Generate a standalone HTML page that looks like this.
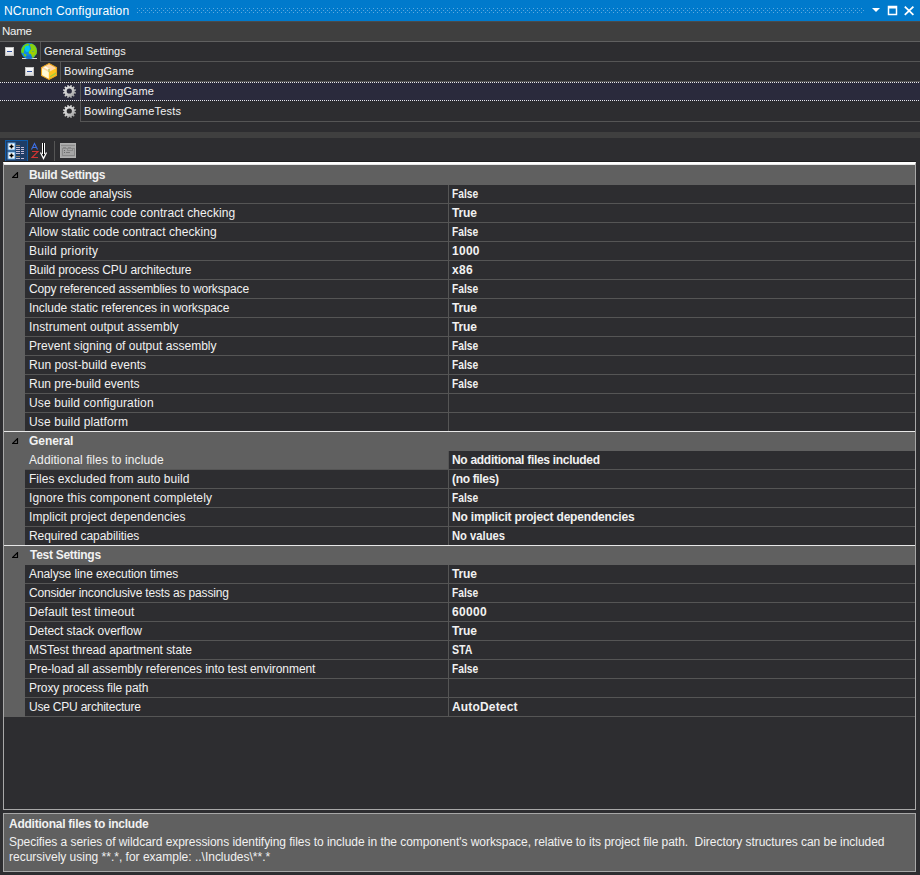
<!DOCTYPE html>
<html><head><meta charset="utf-8">
<style>
*{margin:0;padding:0;box-sizing:border-box}
html,body{width:920px;height:875px;overflow:hidden;background:#2d2d30;font-family:"Liberation Sans",sans-serif;font-size:12px;color:#f1f1f1}
.abs{position:absolute}
#title{position:absolute;left:0;top:0;width:920px;height:21px;background:#007acc}
#title .t{position:absolute;top:4px;line-height:14px;color:#fff;white-space:nowrap}
#grip{position:absolute;left:135px;top:8px;width:729px;height:5px;
 background-image:linear-gradient(#4da3de,#4da3de),linear-gradient(#4da3de,#4da3de),linear-gradient(#4da3de,#4da3de);
 background-size:1px 1px;background-repeat:no-repeat}
#hdrline{position:absolute;left:0;top:21px;width:920px;height:1px;background:#4b4b4b}
#hdr{position:absolute;left:0;top:22px;width:920px;height:19px;background:#3f3f3f}
#hdr .t{position:absolute;top:2px;line-height:14px;white-space:nowrap;font-size:11px}
#hdrb{position:absolute;left:0;top:41px;width:920px;height:1px;background:#606060}
.hl{position:absolute;height:1px;background:#555}
.vl{position:absolute;width:1px;background:#555}
.tt{position:absolute;line-height:14px;white-space:nowrap;color:#f1f1f1;font-size:11px}
.dot{position:absolute;left:0;width:920px;height:1px;background-image:linear-gradient(to right,#e8e8e8 50%,transparent 50%);background-size:2px 1px}
#splitter{position:absolute;left:0;top:132px;width:920px;height:6px;background:#3f3f3f}
#grid{position:absolute;left:3px;top:162px;width:913px;height:648px;border:1px solid #a8a8a8;border-top:2px solid #fff;background:#2d2d30;overflow:hidden}
#gutter{position:absolute;left:0;top:0;width:21px;height:553px;background:#606060}
.cat{position:absolute;left:0;width:911px;height:19px;background:#606060}
.cat::before{content:"";position:absolute;left:0;top:-1px;width:911px;height:1px;background:#e8e8e8}
.cat.first{border-top:1px solid #9a9a9a}
.cat b{position:absolute;left:25px;top:2px;line-height:14px;font-weight:bold;white-space:nowrap;color:#f1f1f1}
.prow{position:absolute;left:21px;width:890px;height:19px;background:#2d2d30;border-bottom:1px solid #555}
.prow .lab{position:absolute;left:4px;top:2px;line-height:14px;white-space:nowrap}
.prow .val{position:absolute;left:423px;top:0;width:467px;height:18px;border-left:1px solid #555;background:#2d2d30;padding-left:3px;padding-top:2px;line-height:14px;font-weight:bold;white-space:nowrap}
.tri{position:absolute;left:8px;top:6px;width:7px;height:7px}
.prow.sel{background:#606060}
#desc{position:absolute;left:3px;top:813px;width:913px;height:59px;border:1px solid #a8a8a8;background:#606060}
#desc b{position:absolute;left:5px;top:3px;line-height:14px;white-space:nowrap}
#desc p{position:absolute;left:5px;line-height:15px;white-space:nowrap}
</style></head><body>
<div id="title"><span class="t" style="left:4px;letter-spacing:0.15px">NCrunch Configuration</span><svg class="abs" style="left:137px;top:8px" width="727" height="5"><defs><pattern id="gp" width="4" height="4" patternUnits="userSpaceOnUse"><rect x="0" y="0" width="1" height="1" fill="#5ea9de"/><rect x="2" y="2" width="1" height="1" fill="#5ea9de"/></pattern></defs><rect width="727" height="5" fill="url(#gp)"/></svg>
<svg class="abs" style="left:870px;top:5px" width="48" height="12" viewBox="0 0 48 12">
 <path d="M2 3h8l-4 4z" fill="#fff"/>
 <rect x="18.5" y="1.5" width="8" height="8" fill="none" stroke="#fff" stroke-width="1.5"/>
 <rect x="18" y="1" width="9" height="2.5" fill="#fff"/>
 <path d="M34.8 1.6l8.6 8.2M43.4 1.6l-8.6 8.2" stroke="#fff" stroke-width="1.8"/>
</svg>
</div>
<div id="hdrline"></div>
<div id="hdr"><span class="t" style="left:2px;font-size:11.5px;letter-spacing:-0.25px">Name</span></div>
<div id="hdrb"></div>

<!-- tree rows -->
<div class="vl" style="left:40px;top:42px;height:19px"></div>
<div class="hl" style="left:40px;top:61px;width:880px"></div>
<div class="vl" style="left:60px;top:62px;height:19px"></div>
<div class="abs" style="left:0;top:82px;width:920px;height:19px;background:#2a2a3c"></div>
<div class="hl" style="left:80px;top:81px;width:840px"></div>
<div class="dot" style="top:82px"></div>
<div class="dot" style="top:100px"></div>
<div class="vl" style="left:80px;top:83px;height:17px"></div>
<div class="vl" style="left:80px;top:101px;height:20px"></div>
<div class="hl" style="left:80px;top:121px;width:840px"></div>

<!-- expanders -->
<div class="abs" style="left:5px;top:47px;width:9px;height:9px;border:1px solid #c4c4c4;background:linear-gradient(#fff,#dcdcdc)"><div class="abs" style="left:1px;top:3px;width:5px;height:1px;background:#3050a0"></div></div>
<div class="abs" style="left:25px;top:67px;width:9px;height:9px;border:1px solid #c4c4c4;background:linear-gradient(#fff,#dcdcdc)"><div class="abs" style="left:1px;top:3px;width:5px;height:1px;background:#3050a0"></div></div>

<!-- globe -->
<svg class="abs" style="left:21px;top:43px" width="16" height="16" viewBox="0 0 16 16">
 <rect x="1" y="15" width="15" height="1" fill="#d8d8d8"/>
 <circle cx="8" cy="8" r="8" fill="#1088e4"/>
 <path d="M0.2 9.5C0 6 1.5 3 4 1.5L6.5 0.4 8 1 7.5 3 5 3.5 3.5 5.5 3 8 2.5 10.5z" fill="#6ed410"/>
 <path d="M8.5 1.2L11 0.8 13.5 2.2 15.2 4.5 16 8 15.6 11 14 12.5 12.5 14.5 11 15 10 13 10.5 11 8.5 11 7.5 9.5 8.5 7.5 10 6 9.5 4z" fill="#86d20e"/>
 <path d="M10 7.5l2.5-0.5 1.5 2-1 3-2 0-1.5-1.5z" fill="#a4cc00"/>
 <path d="M11 8l1.5 0 0.5 1-1.5 0z" fill="#3aa88a"/>
 <path d="M4 3.5L7 2.5 8.5 3.5 9 6 8 8.5 6 9 4.5 8 3.8 6z" fill="#00c6f6"/>
 <path d="M2.5 10.5l2 0.5 1.5 1.5 0.5 2-2-0.8-1.5-1.5z" fill="#6cc81a"/>
 <path d="M5 12.5l5.5 0 1 2.5-3.5 1-3-0.8z" fill="#1670cc"/>
</svg>
<!-- package box -->
<svg class="abs" style="left:40px;top:62px" width="18" height="19" viewBox="0 0 18 19">
 <path d="M9 1.5L16.5 5.5V13.5L9 17.5 1.5 13.5V5.5z" fill="#ffd6a6"/>
 <path d="M1.5 6L8.5 10V17L1.5 13.5z" fill="#fffbd2"/>
 <path d="M9 10L16.5 6V13.5L9 17.5z" fill="#ffc41e"/>
 <path d="M10 15.5l6-3.5v-1.8l-6 3.8z" fill="#a4cc3c"/>
 <path d="M3 5l5 2.8 1.2-1.3L4.5 3.8z" fill="#fffef0"/>
 <path d="M8.5 6.5l1 1 0 3-1-0.5z" fill="#9cc840"/>
 <path d="M9 1.5L16.5 5.5V13.5L9 17.5 1.5 13.5V5.5z" fill="none" stroke="#e9a41c" stroke-width="1.1"/>
</svg>
<!-- gears -->
<svg class="abs" style="left:62px;top:84px" width="15" height="15" viewBox="0 0 15 15">
 <defs><linearGradient id="gg" x1="0" y1="0" x2="1" y2="1"><stop offset="0" stop-color="#ececec"/><stop offset="0.55" stop-color="#c8c8c8"/><stop offset="1" stop-color="#8a8a8a"/></linearGradient></defs>
 <path d="M12.70 7.50 L12.67 8.04 L14.11 8.62 L13.78 9.84 L12.25 9.62 L12.00 10.10 L11.71 10.56 L12.66 11.77 L11.77 12.66 L10.56 11.71 L10.10 12.00 L9.62 12.25 L9.84 13.78 L8.62 14.11 L8.04 12.67 L7.50 12.70 L6.96 12.67 L6.38 14.11 L5.16 13.78 L5.38 12.25 L4.90 12.00 L4.44 11.71 L3.23 12.66 L2.34 11.77 L3.29 10.56 L3.00 10.10 L2.75 9.62 L1.22 9.84 L0.89 8.62 L2.33 8.04 L2.30 7.50 L2.33 6.96 L0.89 6.38 L1.22 5.16 L2.75 5.38 L3.00 4.90 L3.29 4.44 L2.34 3.23 L3.23 2.34 L4.44 3.29 L4.90 3.00 L5.38 2.75 L5.16 1.22 L6.38 0.89 L6.96 2.33 L7.50 2.30 L8.04 2.33 L8.62 0.89 L9.84 1.22 L9.62 2.75 L10.10 3.00 L10.56 3.29 L11.77 2.34 L12.66 3.23 L11.71 4.44 L12.00 4.90 L12.25 5.38 L13.78 5.16 L14.11 6.38 L12.67 6.96Z" fill="url(#gg)"/>
 <circle cx="7.3" cy="7" r="2.6" fill="#2a2a3c"/>
</svg>
<svg class="abs" style="left:62px;top:104px" width="15" height="15" viewBox="0 0 15 15">
 <path d="M12.70 7.50 L12.67 8.04 L14.11 8.62 L13.78 9.84 L12.25 9.62 L12.00 10.10 L11.71 10.56 L12.66 11.77 L11.77 12.66 L10.56 11.71 L10.10 12.00 L9.62 12.25 L9.84 13.78 L8.62 14.11 L8.04 12.67 L7.50 12.70 L6.96 12.67 L6.38 14.11 L5.16 13.78 L5.38 12.25 L4.90 12.00 L4.44 11.71 L3.23 12.66 L2.34 11.77 L3.29 10.56 L3.00 10.10 L2.75 9.62 L1.22 9.84 L0.89 8.62 L2.33 8.04 L2.30 7.50 L2.33 6.96 L0.89 6.38 L1.22 5.16 L2.75 5.38 L3.00 4.90 L3.29 4.44 L2.34 3.23 L3.23 2.34 L4.44 3.29 L4.90 3.00 L5.38 2.75 L5.16 1.22 L6.38 0.89 L6.96 2.33 L7.50 2.30 L8.04 2.33 L8.62 0.89 L9.84 1.22 L9.62 2.75 L10.10 3.00 L10.56 3.29 L11.77 2.34 L12.66 3.23 L11.71 4.44 L12.00 4.90 L12.25 5.38 L13.78 5.16 L14.11 6.38 L12.67 6.96Z" fill="url(#gg)"/>
 <circle cx="7.3" cy="7" r="2.6" fill="#2d2d30"/>
</svg>

<span class="tt" style="left:44px;top:44px;letter-spacing:-0.017px">General Settings</span>
<span class="tt" style="left:64px;top:64px;letter-spacing:0.15px">BowlingGame</span>
<span class="tt" style="left:84px;top:84px;letter-spacing:0.14px">BowlingGame</span>
<span class="tt" style="left:84px;top:104px;letter-spacing:0.183px">BowlingGameTests</span>

<div id="splitter"></div>

<!-- toolbar -->
<div class="abs" style="left:5px;top:140px;width:23px;height:22px;border:1px solid #0e5aa7;background:#1f3d66"></div>
<svg class="abs" style="left:5px;top:140px" width="23" height="22" viewBox="0 0 23 22">
 <rect x="3" y="3" width="7" height="7" fill="#fff" stroke="#5aa0e0" stroke-width="1"/>
 <path d="M6.5 4.5v4M4.5 6.5h4" stroke="#000" stroke-width="1.6"/>
 <rect x="3" y="12" width="7" height="7" fill="#fff" stroke="#5aa0e0" stroke-width="1"/>
 <path d="M6.5 13.5v4M4.5 15.5h4" stroke="#000" stroke-width="1.6"/>
 <g fill="#c4bcd8"><rect x="11" y="7" width="4" height="1"/><rect x="16" y="7" width="3" height="1"/>
 <rect x="11" y="9" width="4" height="1"/><rect x="16" y="9" width="3" height="1"/>
 <rect x="11" y="11" width="4" height="1"/><rect x="16" y="11" width="3" height="1"/>
 <rect x="11" y="13" width="4" height="1"/><rect x="16" y="13" width="3" height="1"/>
 <rect x="11" y="18" width="4" height="1"/><rect x="16" y="18" width="3" height="1"/></g>
 <rect x="11" y="5" width="4" height="1" fill="#8a7a60"/><rect x="11" y="16" width="4" height="1" fill="#8a7a60"/>
</svg>
<svg class="abs" style="left:30px;top:142px" width="18" height="18" viewBox="0 0 18 18" shape-rendering="crispEdges">
 <path d="M1.5 7.5L4.5 1.5 7.5 7.5M3 5.5H6" fill="none" stroke="#3d6fe6" stroke-width="1.1" shape-rendering="auto"/>
 <path d="M2 9.5H8L2 15.5H8" fill="none" stroke="#d03434" stroke-width="1.1" shape-rendering="auto"/>
 <rect x="12" y="1" width="1" height="11" fill="#fff"/><rect x="14" y="1" width="1" height="11" fill="#fff"/>
 <rect x="13" y="1" width="1" height="13" fill="#000"/>
 <path d="M10.5 10.5L13.5 16.5 16.5 10.5" fill="none" stroke="#fff" stroke-width="1.3" shape-rendering="auto"/>
</svg>
<div class="abs" style="left:54px;top:141px;width:1px;height:21px;background:#555"></div>
<svg class="abs" style="left:60px;top:143px" width="16" height="15" viewBox="0 0 16 15" shape-rendering="crispEdges">
 <rect x="0" y="0" width="16" height="15" fill="#b0b0b0"/>
 <rect x="1" y="1" width="14" height="13" fill="#a6a6a6"/>
 <rect x="1" y="2" width="14" height="1" fill="#8e8e8e"/>
 <rect x="2" y="5" width="12" height="7" fill="none" stroke="#8a8a8a" stroke-width="1"/>
 <rect x="3" y="4" width="3" height="1" fill="#8a8a8a"/><rect x="8" y="4" width="3" height="1" fill="#8a8a8a"/>
 <rect x="7" y="5" width="5" height="2" fill="none" stroke="#8a8a8a" stroke-width="1"/>
 <rect x="4" y="7" width="1" height="1" fill="#6a6a6a"/><rect x="4" y="9" width="1" height="1" fill="#6a6a6a"/><rect x="6" y="9" width="4" height="1" fill="#7a7a7a"/>
</svg>

<div class="abs" style="left:3px;top:161px;width:913px;height:1px;background:#1e1e1f"></div>
<div id="grid">
 <div id="gutter"></div>
<div class="cat first" style="top:0px;height:21px"><svg class="tri" style="top:7px" width="7" height="7"><path d="M0.6 5.5H5.5V0.6z" fill="none" stroke="#000" stroke-width="1.15"/></svg><b style="top:3px;left:25px;letter-spacing:-0.323px">Build Settings</b></div>
<div class="prow" style="top:21px"><span class="lab" style="left:4px;letter-spacing:-0.111px">Allow code analysis</span><span class="val"><i style="font-style:normal;display:inline-block;transform:scaleX(0.8516);transform-origin:0 0">False</i></span></div>
<div class="prow" style="top:40px"><span class="lab" style="left:4px;letter-spacing:0.1px">Allow dynamic code contract checking</span><span class="val"><i style="font-style:normal;letter-spacing:-0.167px">True</i></span></div>
<div class="prow" style="top:59px"><span class="lab" style="left:4px;letter-spacing:0.044px">Allow static code contract checking</span><span class="val"><i style="font-style:normal;display:inline-block;transform:scaleX(0.8516);transform-origin:0 0">False</i></span></div>
<div class="prow" style="top:78px"><span class="lab" style="left:4px;letter-spacing:0.231px">Build priority</span><span class="val"><i style="font-style:normal;letter-spacing:0.267px">1000</i></span></div>
<div class="prow" style="top:97px"><span class="lab" style="left:4px;letter-spacing:-0.147px">Build process CPU architecture</span><span class="val"><i style="font-style:normal;letter-spacing:0.3px">x86</i></span></div>
<div class="prow" style="top:116px"><span class="lab" style="left:4px;letter-spacing:-0.158px">Copy referenced assemblies to workspace</span><span class="val"><i style="font-style:normal;display:inline-block;transform:scaleX(0.8516);transform-origin:0 0">False</i></span></div>
<div class="prow" style="top:135px"><span class="lab" style="left:4px;letter-spacing:-0.081px">Include static references in workspace</span><span class="val"><i style="font-style:normal;letter-spacing:-0.167px">True</i></span></div>
<div class="prow" style="top:154px"><span class="lab" style="left:4px;letter-spacing:0.08px">Instrument output assembly</span><span class="val"><i style="font-style:normal;letter-spacing:-0.167px">True</i></span></div>
<div class="prow" style="top:173px"><span class="lab" style="left:4px;letter-spacing:0.023px">Prevent signing of output assembly</span><span class="val"><i style="font-style:normal;display:inline-block;transform:scaleX(0.8516);transform-origin:0 0">False</i></span></div>
<div class="prow" style="top:192px"><span class="lab" style="left:4px;letter-spacing:0.05px">Run post-build events</span><span class="val"><i style="font-style:normal;display:inline-block;transform:scaleX(0.8516);transform-origin:0 0">False</i></span></div>
<div class="prow" style="top:211px"><span class="lab" style="left:4px;letter-spacing:-0.013px">Run pre-build events</span><span class="val"><i style="font-style:normal;display:inline-block;transform:scaleX(0.8516);transform-origin:0 0">False</i></span></div>
<div class="prow" style="top:230px"><span class="lab" style="left:4px;letter-spacing:0.114px">Use build configuration</span><span class="val"></span></div>
<div class="prow" style="top:249px"><span class="lab" style="left:4px;letter-spacing:0.132px">Use build platform</span><span class="val"></span></div>
<div class="cat" style="top:268px"><svg class="tri" width="7" height="7"><path d="M0.6 5.5H5.5V0.6z" fill="none" stroke="#000" stroke-width="1.15"/></svg><b style="left:25px;letter-spacing:-0.05px">General</b></div>
<div class="prow sel" style="top:287px"><span class="lab" style="left:4px;letter-spacing:0.1px">Additional files to include</span><span class="val"><i style="font-style:normal;letter-spacing:-0.296px">No additional files included</i></span></div>
<div class="prow" style="top:306px"><span class="lab" style="left:4px;letter-spacing:0.031px">Files excluded from auto build</span><span class="val"><i style="font-style:normal;letter-spacing:-0.333px">(no files)</i></span></div>
<div class="prow" style="top:325px"><span class="lab" style="left:4px;letter-spacing:0.113px">Ignore this component completely</span><span class="val"><i style="font-style:normal;display:inline-block;transform:scaleX(0.8516);transform-origin:0 0">False</i></span></div>
<div class="prow" style="top:344px"><span class="lab" style="left:4px;letter-spacing:0.064px">Implicit project dependencies</span><span class="val"><i style="font-style:normal;letter-spacing:-0.177px">No implicit project dependencies</i></span></div>
<div class="prow" style="top:363px"><span class="lab" style="left:4px;letter-spacing:-0.055px">Required capabilities</span><span class="val"><i style="font-style:normal;display:inline-block;transform:scaleX(0.9342);transform-origin:0 0">No values</i></span></div>
<div class="cat" style="top:382px"><svg class="tri" width="7" height="7"><path d="M0.6 5.5H5.5V0.6z" fill="none" stroke="#000" stroke-width="1.15"/></svg><b style="left:26px;letter-spacing:-0.283px">Test Settings</b></div>
<div class="prow" style="top:401px"><span class="lab" style="left:4px;letter-spacing:-0.078px">Analyse line execution times</span><span class="val"><i style="font-style:normal;letter-spacing:-0.167px">True</i></span></div>
<div class="prow" style="top:420px"><span class="lab" style="left:4px;letter-spacing:-0.168px">Consider inconclusive tests as passing</span><span class="val"><i style="font-style:normal;display:inline-block;transform:scaleX(0.8516);transform-origin:0 0">False</i></span></div>
<div class="prow" style="top:439px"><span class="lab" style="left:4px;letter-spacing:0.1px">Default test timeout</span><span class="val"><i style="font-style:normal;letter-spacing:0.3px">60000</i></span></div>
<div class="prow" style="top:458px"><span class="lab" style="left:4px;letter-spacing:-0.06px">Detect stack overflow</span><span class="val"><i style="font-style:normal;letter-spacing:-0.167px">True</i></span></div>
<div class="prow" style="top:477px"><span class="lab" style="left:4px;letter-spacing:-0.039px">MSTest thread apartment state</span><span class="val"><i style="font-style:normal;display:inline-block;transform:scaleX(0.8826);transform-origin:0 0">STA</i></span></div>
<div class="prow" style="top:496px"><span class="lab" style="left:4px;letter-spacing:-0.057px">Pre-load all assembly references into test environment</span><span class="val"><i style="font-style:normal;display:inline-block;transform:scaleX(0.8516);transform-origin:0 0">False</i></span></div>
<div class="prow" style="top:515px"><span class="lab" style="left:4px;letter-spacing:-0.091px">Proxy process file path</span><span class="val"></span></div>
<div class="prow" style="top:534px"><span class="lab" style="left:4px;letter-spacing:-0.211px">Use CPU architecture</span><span class="val"><i style="font-style:normal;letter-spacing:0.167px">AutoDetect</i></span></div>
</div>

<div id="desc"><b style="letter-spacing:-0.242px">Additional files to include</b><p style="top:21px;letter-spacing:-0.046px">Specifies a series of wildcard expressions identifying files to include in the component's workspace, relative to its project file path.&nbsp; Directory structures can be included</p><p style="top:36px;letter-spacing:-0.005px">recursively using **.*, for example: ..\Includes\**.*</p></div>
</body></html>
